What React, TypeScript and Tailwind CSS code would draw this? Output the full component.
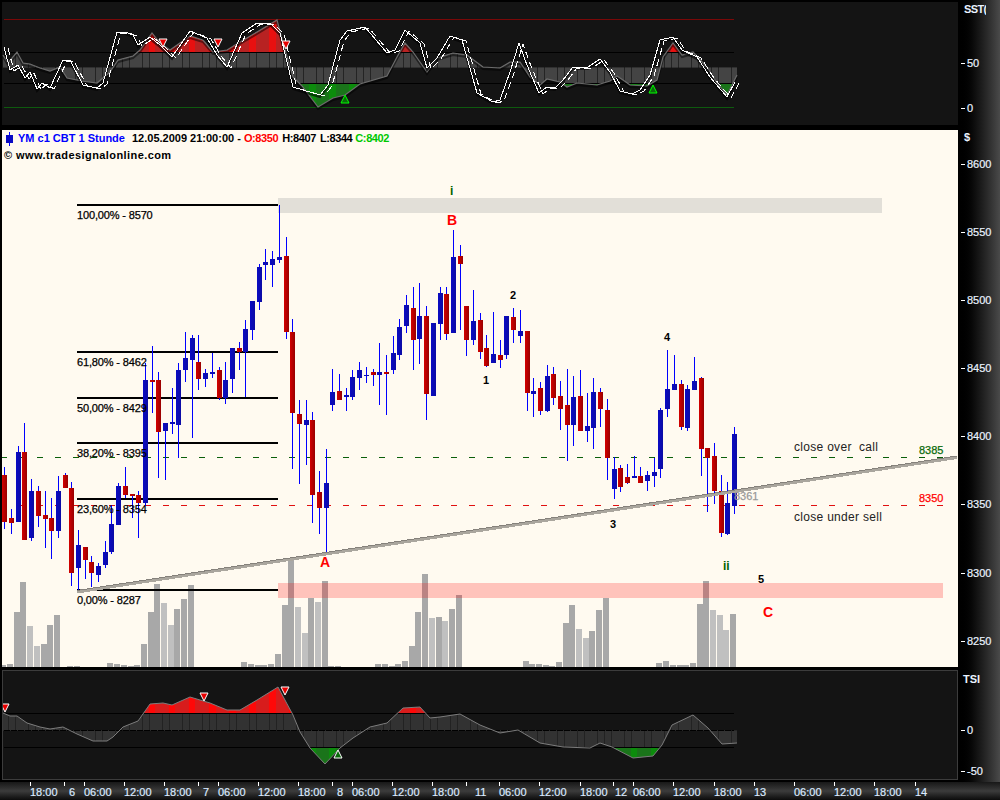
type Candle = [number, number, number, number, 'r' | 'b']

// body top, body bottom, wick top, wick bottom, colour (one per hour bar)
const candles: Candle[] = [
  [475, 522, 467, 529, 'r'], [518, 523, 509, 534, 'r'], [452, 522, 446, 522, 'b'], [452, 540, 423, 540, 'r'],
  [491, 538, 479, 541, 'b'], [491, 516, 486, 527, 'r'], [515, 519, 491, 548, 'r'], [518, 531, 498, 559, 'r'],
  [491, 531, 476, 538, 'b'], [475, 488, 473, 488, 'r'], [488, 573, 482, 586, 'r'], [545, 568, 530, 590, 'b'],
  [547, 560, 547, 579, 'r'], [562, 573, 556, 587, 'r'], [566, 575, 563, 582, 'b'], [552, 565, 541, 568, 'b'],
  [524, 552, 505, 554, 'b'], [486, 525, 483, 525, 'b'], [486, 495, 467, 498, 'r'], [494, 496, 494, 518, 'r'],
  [495, 503, 491, 538, 'r'], [380, 503, 363, 506, 'b'], [380, 382, 346, 413, 'r'], [380, 432, 372, 478, 'r'],
  [423, 431, 423, 480, 'b'], [422, 424, 388, 434, 'b'], [370, 425, 363, 458, 'b'], [358, 370, 332, 382, 'b'],
  [338, 360, 335, 438, 'b'], [362, 379, 335, 390, 'r'], [373, 379, 369, 387, 'b'], [372, 374, 353, 378, 'b'],
  [370, 398, 367, 400, 'r'], [380, 398, 362, 404, 'b'], [348, 379, 348, 393, 'b'], [348, 352, 342, 370, 'r'],
  [329, 352, 320, 397, 'b'], [301, 330, 301, 340, 'b'], [267, 302, 264, 310, 'b'], [262, 265, 249, 280, 'b'],
  [259, 265, 251, 287, 'b'], [257, 260, 205, 263, 'b'], [256, 332, 237, 339, 'r'], [332, 413, 319, 469, 'r'],
  [414, 424, 400, 484, 'r'], [420, 425, 400, 465, 'b'], [420, 495, 412, 523, 'r'], [492, 508, 471, 534, 'r'],
  [483, 508, 449, 552, 'b'], [392, 405, 369, 411, 'b'], [391, 400, 374, 400, 'r'], [395, 397, 388, 411, 'b'],
  [377, 397, 370, 400, 'b'], [370, 378, 362, 390, 'b'], [375, 376, 367, 383, 'b'], [372, 375, 369, 386, 'r'],
  [372, 375, 343, 405, 'b'], [372, 374, 355, 415, 'r'], [353, 370, 336, 374, 'b'], [327, 355, 319, 360, 'b'],
  [305, 326, 295, 333, 'b'], [308, 340, 287, 370, 'r'], [316, 339, 283, 364, 'b'], [316, 394, 306, 420, 'r'],
  [323, 396, 323, 396, 'b'], [293, 324, 287, 340, 'b'], [294, 334, 287, 340, 'r'], [257, 333, 230, 333, 'b'],
  [256, 264, 245, 330, 'r'], [306, 340, 306, 356, 'r'], [321, 340, 290, 345, 'b'], [320, 352, 313, 359, 'r'],
  [348, 366, 335, 367, 'r'], [354, 363, 312, 363, 'b'], [355, 360, 340, 368, 'r'], [316, 355, 316, 359, 'b'],
  [317, 330, 308, 343, 'r'], [331, 336, 310, 343, 'b'], [331, 393, 331, 411, 'r'], [391, 394, 378, 417, 'b'],
  [388, 411, 382, 415, 'r'], [376, 411, 365, 412, 'b'], [374, 398, 367, 405, 'r'], [396, 409, 381, 430, 'r'],
  [405, 425, 369, 461, 'r'], [397, 425, 376, 446, 'b'], [396, 431, 370, 431, 'r'], [426, 431, 393, 442, 'b'],
  [392, 428, 378, 449, 'b'], [392, 409, 388, 427, 'r'], [410, 458, 399, 480, 'r'], [469, 489, 457, 499, 'b'],
  [468, 487, 465, 492, 'r'], [477, 483, 464, 484, 'r'], [476, 478, 456, 478, 'b'], [476, 483, 467, 483, 'r'],
  [475, 481, 471, 491, 'b'], [472, 476, 458, 487, 'b'], [410, 469, 408, 478, 'b'], [389, 409, 350, 417, 'b'],
  [384, 390, 355, 390, 'b'], [384, 427, 380, 430, 'r'], [389, 428, 385, 431, 'b'], [381, 390, 357, 390, 'b'],
  [378, 449, 377, 476, 'r'], [448, 458, 448, 512, 'r'], [456, 491, 443, 504, 'r'], [491, 533, 475, 537, 'r'],
  [503, 534, 482, 535, 'b'], [434, 506, 427, 514, 'b'],
]

// top of the volume bar by bar index
const volume: Record<number, number> = {
  0: 665, 1: 664, 2: 612, 3: 582, 4: 626, 5: 646, 6: 644, 7: 625, 8: 615, 10: 666, 11: 666, 16: 663, 17: 664,
  18: 665, 19: 666, 20: 665, 21: 644, 22: 612, 23: 584, 24: 603, 25: 625, 26: 609, 27: 599, 28: 585, 36: 662,
  37: 664, 38: 665, 39: 665, 40: 664, 41: 654, 42: 605, 43: 560, 44: 607, 45: 633, 46: 598, 47: 602, 48: 581,
  49: 666, 50: 666, 56: 664, 57: 664, 58: 666, 59: 664, 60: 661, 61: 646, 62: 612, 63: 574, 64: 618, 65: 617,
  66: 621, 67: 609, 68: 595, 78: 661, 79: 664, 80: 664, 81: 665, 82: 666, 83: 662, 84: 623, 85: 605, 86: 629,
  87: 638, 88: 631, 89: 610, 90: 598, 98: 663, 99: 661, 100: 665, 101: 665, 102: 665, 103: 663, 104: 604,
  105: 581, 106: 610, 107: 615, 108: 630, 109: 614,
}
const lightVolume = [4, 5, 24, 25, 44, 45, 47, 64, 66, 86, 87, 106, 107, 108]

const barX = (i: number) => 4.33 + 6.695 * i

type Pt = [number, number]
const toPath = (pts: Pt[]) => pts.map(([x, y]) => `${x},${y}`).join(' ')

const sstGrey: Pt[] = [
  [3, 55], [8, 63], [17, 52], [23, 63], [30, 64], [40, 68], [50, 71], [60, 67], [67, 78], [82, 81], [97, 83],
  [110, 72], [118, 60], [133, 56], [140, 50], [152, 33], [160, 43], [170, 50], [190, 36], [203, 40], [213, 52],
  [227, 50], [240, 42], [257, 32], [277, 20], [283, 43], [293, 77], [302, 86], [318, 107], [333, 98], [345, 95],
  [360, 84], [387, 76], [397, 57], [405, 43], [413, 52], [427, 72], [437, 58], [453, 53], [467, 55], [483, 67],
  [500, 68], [510, 62], [520, 62], [530, 77], [540, 85], [547, 79], [560, 82], [567, 87], [577, 83], [597, 85],
  [610, 81], [617, 76], [623, 80], [630, 85], [647, 86], [657, 80], [663, 57], [673, 43], [682, 55], [693, 52],
  [707, 67], [717, 83], [727, 95], [733, 83], [737, 75],
]
const sstFast: Pt[] = [
  [4, 47], [10, 70], [18, 65], [25, 78], [30, 72], [37, 89], [42, 83], [50, 88], [63, 60], [70, 60], [83, 85],
  [97, 88], [103, 83], [117, 32], [125, 32], [133, 35], [138, 45], [150, 37], [160, 45], [172, 57], [190, 31],
  [207, 38], [217, 55], [227, 67], [242, 33], [257, 23], [270, 23], [280, 33], [293, 87], [303, 90], [320, 95],
  [328, 85], [340, 40], [347, 31], [365, 27], [387, 53], [395, 50], [405, 30], [420, 43], [427, 68], [437, 58],
  [450, 36], [462, 40], [477, 93], [493, 102], [500, 100], [510, 72], [519, 43], [525, 60], [532, 77], [539, 93],
  [547, 87], [555, 88], [563, 80], [573, 67], [588, 67], [600, 59], [610, 72], [620, 91], [632, 94], [640, 90],
  [650, 75], [660, 40], [673, 37], [682, 50], [697, 57], [710, 77], [727, 97], [735, 82],
]
const tsiGrey: Pt[] = [
  [3, 713], [10, 716], [17, 716], [27, 723], [40, 727], [50, 729], [63, 727], [77, 734], [93, 741], [107, 741],
  [113, 737], [123, 727], [138, 721], [150, 704], [163, 703], [172, 705], [190, 697], [210, 703], [227, 710],
  [240, 710], [257, 700], [278, 687], [293, 715], [300, 732], [310, 748], [325, 764], [340, 748], [353, 738],
  [370, 727], [387, 723], [403, 708], [420, 707], [430, 718], [440, 717], [460, 714], [480, 725], [500, 733],
  [518, 730], [540, 743], [563, 747], [590, 748], [600, 743], [612, 747], [633, 758], [653, 756], [662, 745],
  [672, 725], [693, 715], [708, 728], [722, 744], [737, 743],
]

const sstDown: Pt[] = [[163, 43], [218, 43], [286, 45]]
const tsiDown: Pt[] = [[5, 708], [204, 697], [285, 691]]

const timeTicks: [number, number, string][] = [
  [30, 30, '18:00'], [64, 69, '6'], [84, 84, '06:00'], [124, 124, '12:00'], [164, 164, '18:00'], [198, 203, '7'],
  [218, 218, '06:00'], [258, 258, '12:00'], [298, 298, '18:00'], [332, 337, '8'], [352, 352, '06:00'],
  [392, 392, '12:00'], [432, 432, '18:00'], [466, 475, '11'], [499, 499, '06:00'], [539, 539, '12:00'],
  [580, 580, '18:00'], [613, 615, '12'], [633, 633, '06:00'], [673, 673, '12:00'], [714, 714, '18:00'],
  [754, 754, '13'], [794, 794, '06:00'], [834, 834, '12:00'], [874, 874, '18:00'], [915, 915, '14'],
]

const fibs: [number, string][] = [
  [205, '100,00% - 8570'], [352, '61,80% - 8462'], [398, '50,00% - 8429'], [443, '38,20% - 8395'],
  [499, '23,60% - 8354'], [590, '0,00% - 8287'],
]

const rightLabels: [number, string][] = [
  [63, '50'], [108, '0'], [164, '8600'], [232, '8550'], [300, '8500'], [368, '8450'], [436, '8400'], [504, '8350'],
  [573, '8300'], [641, '8250'], [730, '0'], [771, '-50'],
]

// histogram columns clipped to the area between an oscillator curve and its midline
function Histogram({ id, curve, mid, top, bottom, bar, band, reds }: {
  id: string
  curve: Pt[]
  mid: number
  top: number
  bottom: number
  bar: string
  band: string
  reds: [string, string]
}) {
  const first = curve[0][0]
  const last = curve[curve.length - 1][0]
  return (
    <>
      <clipPath id={id}>
        <polygon points={`${first},${mid} ${toPath(curve)} ${last},${mid}`} />
      </clipPath>
      <g clipPath={`url(#${id})`} shapeRendering="crispEdges">
        <rect x={first} y={top} width={last - first} height={bottom - top} fill={band} />
        {candles.map((_, i) => (
          <g key={i}>
            <rect x={Math.round(barX(i)) - 2} y={top} width={6} height={bottom - top} fill={bar} />
            <rect x={Math.round(barX(i)) - 3} y={top - 60} width={7} height={60} fill={i % 3 === 1 ? reds[0] : reds[1]} />
            <rect x={Math.round(barX(i)) - 3} y={bottom} width={7} height={60} fill={i % 3 === 1 ? '#0c8c0c' : '#1a741a'} />
          </g>
        ))}
      </g>
    </>
  )
}

function Triangle({ x, y, down, fill, stroke }: { x: number; y: number; down: boolean; fill: string; stroke: string }) {
  const pts = down
    ? `${x - 4},${y - 4} ${x + 4},${y - 4} ${x},${y + 4}`
    : `${x - 4},${y + 4} ${x + 4},${y + 4} ${x},${y - 4}`
  return <polygon points={pts} fill={fill} stroke={stroke} strokeWidth={1} />
}

function SstPanel() {
  return (
    <svg viewBox="2 2 956 123" className="w-[956px] h-[123px] block bg-[#141414]">
      <Histogram id="sstClip" curve={sstGrey} mid={67.5} top={52.5} bottom={83} bar="#444444" band="#242424" reds={['#e81010', '#b82222']} />
      <g shapeRendering="crispEdges">
        <line x1={4} x2={734} y1={19.5} y2={19.5} stroke="#7a0808" />
        <line x1={4} x2={734} y1={107.5} y2={107.5} stroke="#0e5a0e" />
        <line x1={4} x2={734} y1={52.5} y2={52.5} stroke="#000" />
        <line x1={4} x2={734} y1={83.5} y2={83.5} stroke="#000" />
      </g>
      <polyline points={toPath(sstGrey.map(([x, y]) => [x, y + 2]))} fill="none" stroke="#000" strokeOpacity={0.5} strokeWidth={2} />
      <polyline points={toPath(sstGrey)} fill="none" stroke="#6c6c6c" strokeWidth={1.2} />
      <polyline points={toPath(sstFast.map(([x, y]) => [x, y + 2]))} fill="none" stroke="#000" strokeOpacity={0.6} strokeWidth={2} />
      <g shapeRendering="crispEdges">
        <polyline points={toPath(sstFast.map(([x, y]) => [x + 4, y + 1]))} fill="none" stroke="#fff" strokeDasharray="7 4" />
        <polyline points={toPath(sstFast)} fill="none" stroke="#fff" />
      </g>
      {sstDown.map(([x, y]) => (
        <Triangle key={x} x={x} y={y} down fill="#e80000" stroke="#fff" />
      ))}
      <Triangle x={345} y={99} down={false} fill="#0a6a0a" stroke="#00ff00" />
      <Triangle x={653} y={89} down={false} fill="#0a6a0a" stroke="#00ff00" />
    </svg>
  )
}

function TsiPanel() {
  return (
    <div className="w-[956px] h-[110px] border border-[#3c3c3c] bg-[#141414]">
      <svg viewBox="3 671 954 108" className="w-[954px] h-[108px] block">
        <Histogram id="tsiClip" curve={tsiGrey} mid={730.5} top={713} bottom={747.5} bar="#323232" band="#222222" reds={['#ff0808', '#d81c1c']} />
        <g shapeRendering="crispEdges">
          <line x1={4} x2={734} y1={713.5} y2={713.5} stroke="#000" />
          <line x1={4} x2={734} y1={730.5} y2={730.5} stroke="#000" strokeDasharray="6 1" />
          <line x1={4} x2={734} y1={747.5} y2={747.5} stroke="#000" />
        </g>
        <polyline points={toPath(tsiGrey)} fill="none" stroke="#7c7c7c" />
        {tsiDown.map(([x, y]) => (
          <Triangle key={x} x={x} y={y} down fill="#e80000" stroke="#fff" />
        ))}
        <Triangle x={338} y={754} down={false} fill="#0a6a0a" stroke="#fff" />
      </svg>
    </div>
  )
}

function PriceChart() {
  return (
    <svg viewBox="2 130 956 537" className="w-[956px] h-[537px] block">
      <defs>
        <linearGradient id="redBody" x1="0" x2="1" y1="0" y2="0">
          <stop offset="0" stopColor="#d40000" />
          <stop offset="1" stopColor="#980000" />
        </linearGradient>
        <linearGradient id="blueBody" x1="0" x2="1" y1="0" y2="0">
          <stop offset="0" stopColor="#0a0ac4" />
          <stop offset="1" stopColor="#0c0ca4" />
        </linearGradient>
      </defs>

      <g shapeRendering="crispEdges">
        <rect x={278} y={198} width={604} height={15} fill="#e2dfd8" />
        {candles.map((_, i) =>
          volume[i] ? (
            <rect
              key={i}
              x={Math.round(barX(i) - 4)}
              y={volume[i]}
              width={6}
              height={667 - volume[i]}
              fill={lightVolume.includes(i) ? '#c0c0c0' : '#a8a8a8'}
            />
          ) : null,
        )}
        <rect x={278} y={583} width={665} height={15} fill="#ff0000" fillOpacity={0.22} />

        <line x1={1} x2={943} y1={457.5} y2={457.5} stroke="#0a5f0a" strokeDasharray="6 12" />
        <line x1={1} x2={943} y1={505.5} y2={505.5} stroke="#e01010" strokeDasharray="6 12" />

        {fibs.map(([y]) => (
          <rect key={y} x={77} y={y - 1} width={201} height={2} fill="#000" />
        ))}

        {candles.map(([top, bottom, wickTop, wickBottom, color], i) => {
          const x = Math.round(barX(i))
          return (
            <g key={i}>
              <rect x={x} y={wickTop} width={1} height={wickBottom - wickTop} fill="#0000ff" />
              <rect
                x={x - 2}
                y={top}
                width={5}
                height={bottom - top}
                fill={color === 'r' ? 'url(#redBody)' : 'url(#blueBody)'}
              />
            </g>
          )
        })}

        <line x1={77} y1={592} x2={957} y2={457.5} stroke="#aaa69e" strokeWidth={3} />
        <line x1={77} y1={590.5} x2={957} y2={456} stroke="#85817b" strokeWidth={1} />
      </g>

      <g className="text-[11px] tracking-[-0.15px] fill-black" stroke="#000" strokeWidth={0.25}>
        {fibs.map(([y, label]) => (
          <text key={y} x={77} y={y + 14}>
            {label}
          </text>
        ))}
      </g>

      <g className="text-[14px] font-bold fill-[#ff0000]">
        <text x={320} y={567}>A</text>
        <text x={447} y={225}>B</text>
        <text x={763} y={617}>C</text>
      </g>
      <g className="text-[11px] font-bold fill-black">
        <text x={483} y={384}>1</text>
        <text x={510} y={299}>2</text>
        <text x={610} y={528}>3</text>
        <text x={664} y={341}>4</text>
        <text x={758} y={583}>5</text>
      </g>
      <g className="text-[12px] font-bold fill-[#006400]">
        <text x={450} y={195}>i</text>
        <text x={723} y={570}>ii</text>
      </g>

      <g className="text-[12px] tracking-[0.3px] fill-[#222]">
        <text x={794} y={451} xmlSpace="preserve">close over  call</text>
        <text x={794} y={521}>close under sell</text>
      </g>
      <g className="text-[11px]" strokeWidth={0.25}>
        <text x={919} y={454} stroke="#0a6a0a" className="fill-[#0a6a0a]">8385</text>
        <text x={919} y={502} stroke="#ff0000" className="fill-[#ff0000]">8350</text>
        <text x={734} y={500} stroke="#999999" className="fill-[#999999]">8361</text>
      </g>
    </svg>
  )
}

function RightAxis() {
  return (
    <div className="w-[42px] h-[782px] bg-gradient-to-r from-black to-[#4a4a4a]">
      <svg viewBox="958 0 42 782" className="w-[42px] h-[782px] block text-[11px] fill-[#eaf2ff]">
        <clipPath id="sstLabel">
          <rect x={960} y={0} width={26} height={20} />
        </clipPath>
        <text x={964} y={13} clipPath="url(#sstLabel)" className="font-bold tracking-[-0.6px]">SST(</text>
        <text x={964} y={141} className="font-bold">$</text>
        <text x={963} y={683} className="font-bold">TSI</text>
        {rightLabels.map(([y, label]) => (
          <g key={y}>
            <rect x={961} y={y} width={4} height={1} className="fill-white" />
            <text x={967} y={y + 4} stroke="#eaf2ff" strokeWidth={0.2}>{label}</text>
          </g>
        ))}
      </svg>
    </div>
  )
}

function TimeAxis() {
  return (
    <div className="w-[1000px] h-[18px] bg-gradient-to-b from-[#181818] via-[#3c3c3c] to-[#0c0c0c]">
      <svg viewBox="0 782 1000 18" className="w-[1000px] h-[18px] block text-[11px] fill-[#dbe9ff]">
        {timeTicks.map(([tick, x, label]) => (
          <g key={tick}>
            <rect x={tick} y={782} width={1} height={4} className="fill-white" />
            <text x={x} y={796} stroke="#dbe9ff" strokeWidth={0.2}>{label}</text>
          </g>
        ))}
      </svg>
    </div>
  )
}

export default function App() {
  return (
    <div className="w-[1000px] h-[800px] bg-black flex flex-col overflow-hidden font-['Liberation_Sans',Arial,sans-serif]">
      <div className="flex">
        <div className="w-[958px] h-[782px] pt-[2px] pl-[2px] flex flex-col">
          <SstPanel />
          <div className="relative mt-[5px] w-[956px] h-[537px] bg-[#fffaf0]">
            <PriceChart />
            <div className="absolute left-[2px] top-0 flex flex-col text-[11px] font-bold leading-[17px]">
              <div className="flex items-center">
                <svg width="14" height="14" viewBox="0 0 14 14" className="mr-[1px] -ml-[1px]">
                  <rect x={6} y={0} width={1} height={14} fill="#0000ff" />
                  <rect x={3} y={3} width={7} height={8} fill="#0a0ac4" />
                </svg>
                <span className="text-[#0000ff]">YM c1 CBT 1 Stunde</span>
                <span className="ml-[7px] text-black whitespace-pre">12.05.2009 21:00:00 - </span>
                <span className="tracking-[-0.4px] text-[#ff0000]">O:8350</span>
                <span className="ml-[4px] tracking-[-0.4px] text-black">H:8407</span>
                <span className="ml-[4px] tracking-[-0.4px] text-black">L:8344</span>
                <span className="ml-[3px] tracking-[-0.4px] text-[#00c800]">C:8402</span>
              </div>
              <div className="text-black tracking-[0.42px]">© www.tradesignalonline.com</div>
            </div>
          </div>
          <div className="mt-[3px]">
            <TsiPanel />
          </div>
        </div>
        <RightAxis />
      </div>
      <TimeAxis />
    </div>
  )
}
